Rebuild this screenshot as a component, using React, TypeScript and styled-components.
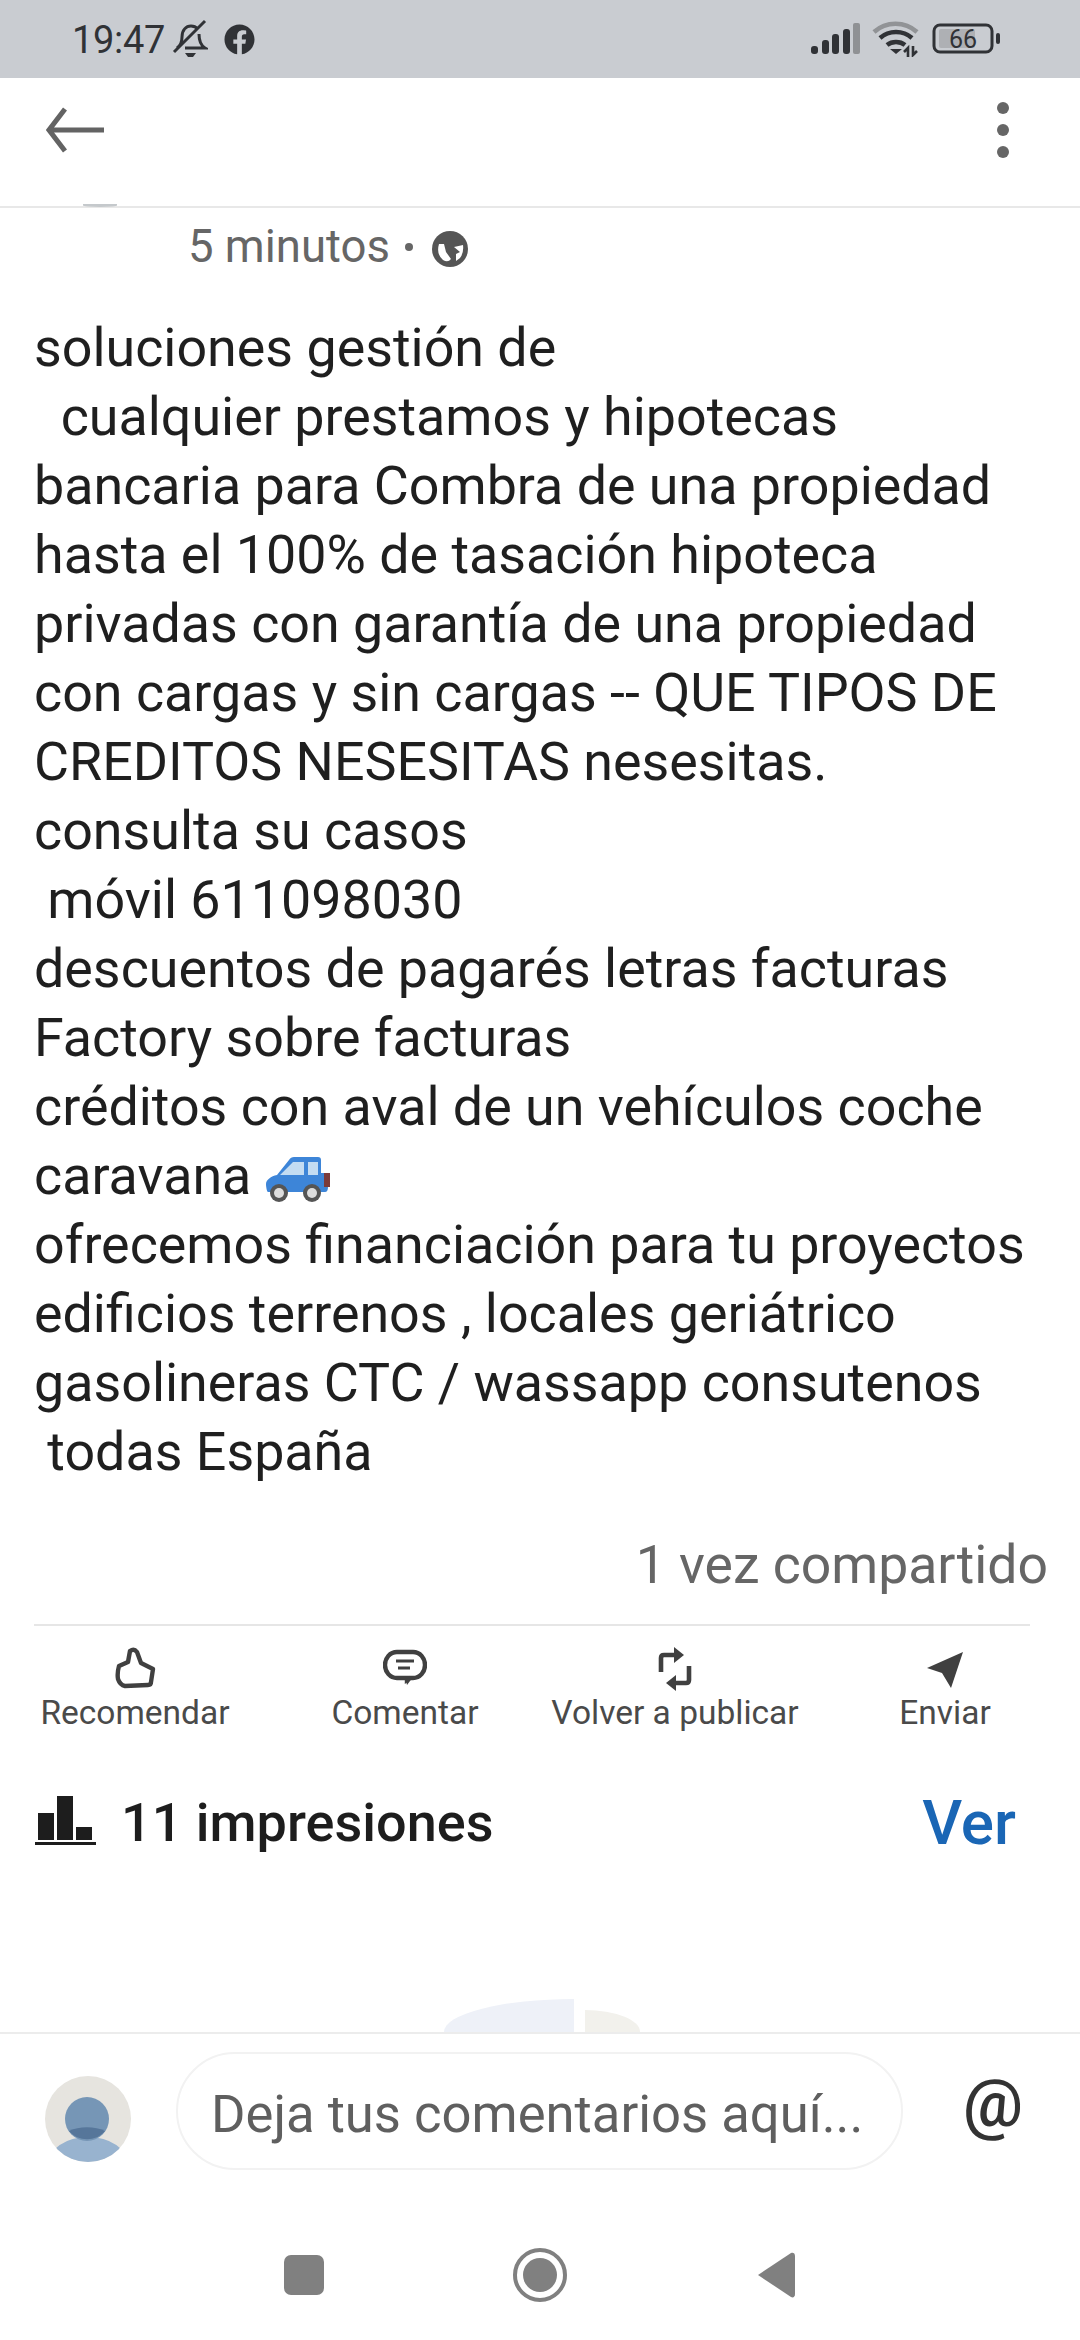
import React from "react";
import styled, { createGlobalStyle } from "styled-components";
import { FaFacebook } from "react-icons/fa";

const Global = createGlobalStyle`
  html, body { margin: 0; padding: 0; background: #fff; }
  * { box-sizing: border-box; }
`;

const Page = styled.div`
  width: 1080px; height: 2340px; display: flex; flex-direction: column;
  background: #fff; font-family: Roboto, "Noto Sans", sans-serif; overflow: hidden; position: relative;
`;
const StatusBar = styled.div`
  height: 78px; flex: none; background: #c9ccd1; display: flex; align-items: center; justify-content: space-between;
  padding: 0 78px 0 72px; color: #303236;
`;
const StatusGroup = styled.div`display: flex; align-items: center;`;
const Clock = styled.span`font-size: 38px; line-height: 1; margin-top: 2px; letter-spacing: -0.3px;`;
const FbIcon = styled(FaFacebook)`width: 31px; height: 31px; margin-left: 16px; color: #303236;`;
const Header = styled.div`
  height: 130px; flex: none; display: flex; align-items: center; justify-content: space-between;
  padding: 0 0 24px 46px; border-bottom: 2px solid #e8e8e8; position: relative;
`;
const HeaderShadow = styled.div`position: absolute; left: 83px; bottom: -1px; width: 34px; height: 3px; background: #c5c9cc; border-radius: 0 0 50% 50%;`;
const Dots = styled.div`display: flex; flex-direction: column; gap: 10px; margin-right: 71px;`;
const Dot = styled.span`width: 12px; height: 12px; border-radius: 50%; background: #666;`;
const Meta = styled.div`
  display: flex; align-items: center; padding: 15px 0 0 188px; height: 62px; font-size: 45.5px; color: #666; flex: none;
`;
const Bullet = styled.span`width: 8px; height: 8px; border-radius: 50%; background: #666; margin: 0 18px 0 15px;`;
const Globe = styled.svg`width: 38px; height: 38px; color: #555; margin-top: 4px;`;
const Body = styled.div`
  padding: 43px 0 0 34px; font-size: 53.8px; line-height: 69px; color: #1f1f1f; white-space: pre; flex: none;
`;
const Line = styled.div`height: 69px;`;
const Car = styled.svg`width: 66px; height: 48px; vertical-align: -9px;`;
const Shared = styled.div`
  text-align: right; padding: 51px 32px 0 0; font-size: 53.5px; line-height: 56px; color: #666; flex: none;
`;
const Divider = styled.div`height: 2px; margin: 31px 50px 0 34px; background: #e6e6e6; flex: none;`;
const Actions = styled.div`display: grid; grid-template-columns: repeat(4, 270px); padding: 21px 0 0 0; flex: none;`;
const Action = styled.div`display: flex; flex-direction: column; align-items: center; height: 84px; justify-content: space-between;`;
const ActionIcon = styled.svg`width: 44px; height: 44px; color: #404040;`;
const ActionLabel = styled.span`font-size: 33.5px; line-height: 36px; color: #4a4a4a; white-space: nowrap;`;
const Stats = styled.div`
  display: flex; align-items: center; padding: 0 64px 0 35px; margin-top: 57px; height: 68px; flex: none;
`;
const StatsText = styled.span`font-size: 54px; font-weight: 500; color: #1d1d1d; margin-left: 24px; flex: 1;`;
const ViewLink = styled.span`font-size: 62px; font-weight: 500; color: #1a66b5;`;
const Spacer = styled.div`flex: 1; position: relative; overflow: hidden;`;
const PeekBlue = styled.div`
  position: absolute; left: 444px; bottom: 0; width: 130px; height: 33px; border-top-left-radius: 130px 33px; background: #eef1f8;
`;
const PeekBeige = styled.div`
  position: absolute; left: 585px; bottom: 0; width: 55px; height: 22px; border-top-right-radius: 55px 22px; background: #f2f1ec;
`;
const Composer = styled.div`
  height: 178px; flex: none; border-top: 2px solid #ececec; display: flex; align-items: flex-start; padding: 18px 0 0 45px;
`;
const Avatar = styled.div`
  width: 86px; height: 86px; margin-top: 24px; border-radius: 50%; background: #e6e4df; overflow: hidden; flex: none;
  display: flex; justify-content: center;
`;
const Input = styled.div`
  width: 727px; height: 118px; margin-left: 45px; border: 2px solid #f2f2f2; border-radius: 59px; display: flex; align-items: center;
  padding: 5px 0 0 33px; font-size: 52.6px; color: #5f5f5f; flex: none; white-space: nowrap;
`;
const At = styled.span`font-size: 67px; font-weight: 500; color: #333; margin: 18px 0 0 60px; line-height: 1;`;
const NavBar = styled.div`
  height: 130px; flex: none; display: grid; grid-template-columns: repeat(3, 236px); justify-content: center; justify-items: center; align-items: center;
`;
const NavSquare = styled.div`width: 40px; height: 40px; border-radius: 7px; background: #808080;`;
const NavCircle = styled.div`
  width: 54px; height: 54px; border-radius: 50%; border: 4px solid #808080; padding: 6px;
  &::after { content: ""; display: block; width: 100%; height: 100%; border-radius: 50%; background: #808080; }
`;
const NavBack = styled.svg`width: 37px; height: 46px; color: #808080;`;

const lines = [
  "soluciones gestión de",
  "  cualquier prestamos y hipotecas",
  "bancaria para Combra de una propiedad",
  "hasta el 100% de tasación hipoteca",
  "privadas con garantía de una propiedad",
  "con cargas y sin cargas -- QUE TIPOS DE",
  "CREDITOS NESESITAS nesesitas.",
  "consulta su casos",
  " móvil 611098030",
  "descuentos de pagarés letras facturas",
  "Factory sobre facturas",
  "créditos con aval de un vehículos coche",
];
const lines2 = [
  "ofrecemos financiación para tu proyectos",
  "edificios terrenos , locales geriátrico",
  "gasolineras CTC / wassapp consutenos",
  " todas España",
];

export default function App() {
  return (
    <Page>
      <Global />
      <StatusBar>
        <StatusGroup>
          <Clock>19:47</Clock>
          <svg width="36" height="40" viewBox="0 0 36 40" style={{ marginLeft: 7 }} fill="none" stroke="#303236" strokeWidth="3">
            <path d="M5 29c3-2 5-5 5-11 0-7 4-11 9-11 3 0 5 1 7 3M27 15c0 6 1 11 6 14H13" />
            <path d="M2 33 33 2" />
            <path d="M13 34h11l-3 4h-5z" fill="#303236" stroke="none" />
          </svg>
          <FbIcon />
        </StatusGroup>
        <StatusGroup>
          <svg width="50" height="32" viewBox="0 0 50 32" fill="#303236">
            <rect x="0" y="23" width="7" height="8" rx="3" />
            <rect x="11" y="17" width="7" height="14" rx="3" />
            <rect x="21" y="11" width="7" height="20" rx="3" />
            <rect x="32" y="6" width="7" height="25" rx="3" />
            <rect x="42" y="0" width="7" height="31" rx="2" fill="#8f9194" />
          </svg>
          <svg width="50" height="36" viewBox="0 0 50 36" fill="none" stroke="#303236" strokeWidth="4.5" style={{ marginLeft: 11 }}>
            <path d="M2 11C14 0 33 0 45 11" stroke="#919396" />
            <path d="M8 17C17 9 31 9 40 17" />
            <path d="M15 24C20 20 28 20 33 24" />
            <path d="M18 28h12l-6 5z" fill="#303236" stroke="none" />
            <path d="M36 36v-9l-4 4M41 25v9l4-4" strokeWidth="2.6" />
          </svg>
          <svg width="70" height="32" viewBox="0 0 70 32" style={{ marginLeft: 10 }}>
            <rect x="2" y="2" width="58" height="27" rx="6" fill="none" stroke="#303236" strokeWidth="3" />
            <rect x="7" y="6" width="36" height="19" rx="2" fill="#aeb0b4" />
            <rect x="64" y="10" width="4" height="11" rx="2" fill="#303236" />
            <text x="31" y="25" textAnchor="middle" fontFamily="Roboto, sans-serif" fontSize="25" fill="#303236">66</text>
          </svg>
        </StatusGroup>
      </StatusBar>
      <Header>
        <svg width="60" height="48" viewBox="0 0 60 48" fill="none" stroke="#636363" strokeWidth="5">
          <path d="M58 24H3M19 3 3 24l16 21" />
        </svg>
        <Dots><Dot /><Dot /><Dot /></Dots>
        <HeaderShadow />
      </Header>
      <Meta>
        5 minutos<Bullet />
        <Globe viewBox="0 0 38 38">
          <circle cx="19" cy="19" r="18" fill="currentColor" />
          <path d="M8 14Q5 24 12 30 17 33 20 29L15 22 13 14z" fill="#fff" />
          <path d="M23 17 32 15Q33 23 29 28L25 31V24L29 22z" fill="#fff" />
        </Globe>
      </Meta>
      <Body>
        {lines.map((l) => <Line key={l}>{l}</Line>)}
        <Line>
          caravana{" "}
          <Car viewBox="0 0 66 48">
            <path d="M1 29c0-4 5-8 11-9L24 5c1-2 3-3 5-3h24c2 0 3 1 3 3v13h7v14c0 3-1 5-3 5H3c-1 0-2-5-2-8z" fill="#3d85d8" />
            <path d="M15 20 28 7h11v13zM43 7h10v13H43z" fill="#c3dcf2" />
            <rect x="59" y="18" width="6" height="14" fill="#7b3b3b" />
            <circle cx="14" cy="38" r="9" fill="#555" /><circle cx="14" cy="38" r="5" fill="#ddd" />
            <circle cx="47" cy="38" r="9" fill="#555" /><circle cx="47" cy="38" r="5" fill="#ddd" />
          </Car>
        </Line>
        {lines2.map((l) => <Line key={l}>{l}</Line>)}
      </Body>
      <Shared>1 vez compartido</Shared>
      <Divider />
      <Actions>
        <Action>
          <ActionIcon viewBox="0 0 44 44" fill="none" stroke="currentColor" strokeWidth="4.4" strokeLinejoin="round">
            <path d="M17 4 15 15 6 19Q4 26 5 32 7 38 12 39L35 38Q38 38 38 35L40 22 28 16 24 5Q21 1 17 4z" />
          </ActionIcon>
          <ActionLabel>Recomendar</ActionLabel>
        </Action>
        <Action>
          <ActionIcon viewBox="0 0 44 44" fill="none" stroke="currentColor" strokeWidth="4.4">
            <path d="M14 5h16c7 0 12 6 12 13s-5 13-12 13h-3l-3 2v-2H14C7 31 2 25 2 18S7 5 14 5z" />
            <path d="M13 14h18M15 21h12" strokeWidth="3" />
            <path d="M22 30h8l-6 8z" fill="currentColor" stroke="none" />
          </ActionIcon>
          <ActionLabel>Comentar</ActionLabel>
        </Action>
        <Action>
          <ActionIcon viewBox="0 0 44 44" fill="none" stroke="currentColor" strokeWidth="4.6">
            <path d="M27 8H11c-2 0-3 1-3 3v14M17 36h16c2 0 3-1 3-3V19" />
            <path d="M21 0l10 8-10 8zM23 28l-10 8 10 8z" fill="currentColor" stroke="none" />
          </ActionIcon>
          <ActionLabel>Volver a publicar</ActionLabel>
        </Action>
        <Action>
          <ActionIcon viewBox="0 0 44 44" fill="currentColor">
            <path d="M40 5 4 21l15 5 9 15z" />
          </ActionIcon>
          <ActionLabel>Enviar</ActionLabel>
        </Action>
      </Actions>
      <Stats>
        <svg width="62" height="52" viewBox="0 0 62 52" fill="#1d1d1d">
          <rect x="3" y="17" width="16" height="27" />
          <rect x="22" y="0" width="16" height="44" />
          <rect x="41" y="31" width="16" height="13" />
          <rect x="0" y="46" width="61" height="3" />
        </svg>
        <StatsText>11 impresiones</StatsText>
        <ViewLink>Ver</ViewLink>
      </Stats>
      <Spacer><PeekBlue /><PeekBeige /></Spacer>
      <Composer>
        <Avatar>
          <svg width="86" height="86" viewBox="0 0 86 86">
            <ellipse cx="43" cy="88" rx="40" ry="27" fill="#98b3cf" />
            <circle cx="42" cy="43" r="22" fill="#7696b6" />
            <path d="M24 55c10-5 26-5 36 0-9 11-27 11-36 0z" fill="#56769a" />
          </svg>
        </Avatar>
        <Input>Deja tus comentarios aquí...</Input>
        <At>@</At>
      </Composer>
      <NavBar>
        <NavSquare />
        <NavCircle />
        <NavBack viewBox="0 0 37 46"><path d="M0 23 33 1c2-1 4 0 4 3v38c0 3-2 4-4 3z" fill="currentColor" /></NavBack>
      </NavBar>
    </Page>
  );
}
